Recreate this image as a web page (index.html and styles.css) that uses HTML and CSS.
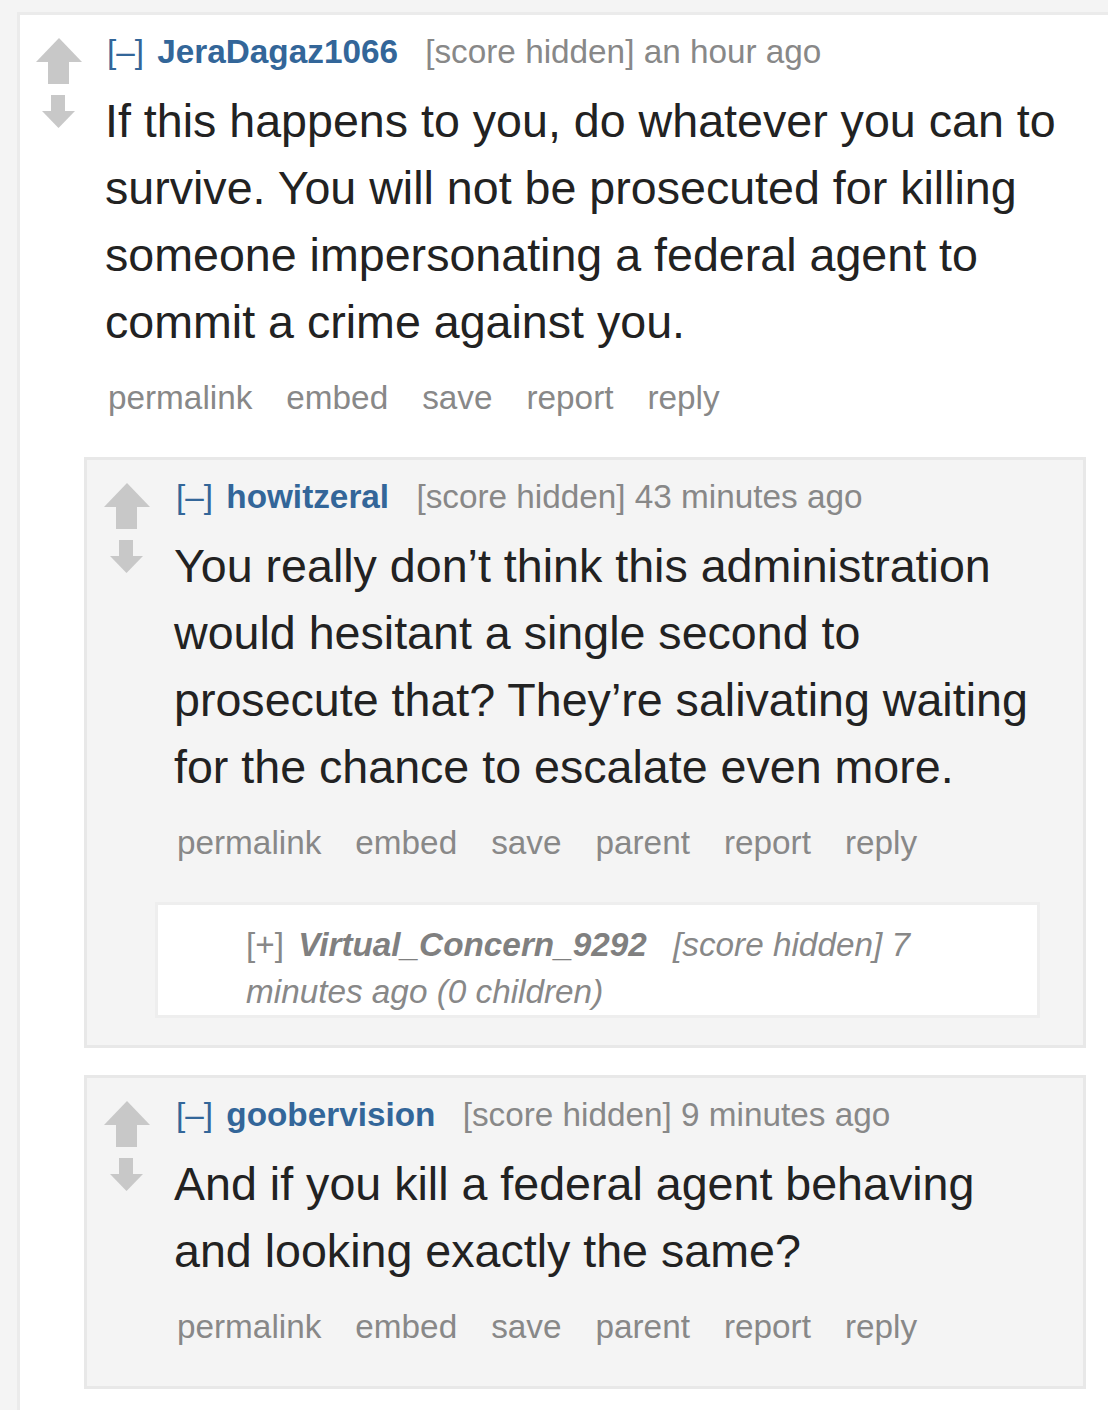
FILE: index.html
```html
<!DOCTYPE html>
<html lang="en">
<head>
    <meta charset="UTF-8">
    <title>comments</title>
    <link rel="stylesheet" href="styles.css">
</head>
<body>
    <div class="thread">
        <div class="comment top">
            <div class="comment-main">
                <div class="midcol">
                    <svg class="arrow-up" width="46" height="46" viewBox="0 0 46 46"><polygon points="0,24 23,0 46,24"/><rect x="12" y="23" width="21" height="23"/></svg>
                    <svg class="arrow-down" width="33" height="33" viewBox="0 0 33 33"><rect x="9" y="0" width="14" height="17"/><polygon points="0,16 33,16 16.5,33"/></svg>
                </div>
                <div class="entry">
                    <p class="tagline"><a class="expand">[–]</a> <a class="author">JeraDagaz1066</a> <span class="score">[score hidden]</span> <span class="time">an hour ago</span></p>
                    <div class="md">If this happens to you, do whatever you can to survive. You will not be prosecuted for killing someone impersonating a federal agent to commit a crime against you.</div>
                    <ul class="buttons">
                        <li>permalink</li>
                        <li>embed</li>
                        <li>save</li>
                        <li>report</li>
                        <li>reply</li>
                    </ul>
                </div>
            </div>
            <div class="children">
                <div class="comment">
                    <div class="comment-main">
                        <div class="midcol">
                            <svg class="arrow-up" width="46" height="46" viewBox="0 0 46 46"><polygon points="0,24 23,0 46,24"/><rect x="12" y="23" width="21" height="23"/></svg>
                            <svg class="arrow-down" width="33" height="33" viewBox="0 0 33 33"><rect x="9" y="0" width="14" height="17"/><polygon points="0,16 33,16 16.5,33"/></svg>
                        </div>
                        <div class="entry">
                            <p class="tagline"><a class="expand">[–]</a> <a class="author">howitzeral</a> <span class="score">[score hidden]</span> <span class="time">43 minutes ago</span></p>
                            <div class="md">You really don’t think this administration would hesitant a single second to prosecute that? They’re salivating waiting for the chance to escalate even more.</div>
                            <ul class="buttons">
                                <li>permalink</li>
                                <li>embed</li>
                                <li>save</li>
                                <li>parent</li>
                                <li>report</li>
                                <li>reply</li>
                            </ul>
                        </div>
                    </div>
                    <div class="children">
                        <div class="comment collapsed">
                            <p class="tagline"><a class="expand">[+]</a> <a class="author">Virtual_Concern_9292</a> <span class="score">[score hidden]</span> <span class="time">7 minutes ago</span> <span class="count">(0 children)</span></p>
                        </div>
                    </div>
                </div>
                <div class="comment">
                    <div class="comment-main">
                        <div class="midcol">
                            <svg class="arrow-up" width="46" height="46" viewBox="0 0 46 46"><polygon points="0,24 23,0 46,24"/><rect x="12" y="23" width="21" height="23"/></svg>
                            <svg class="arrow-down" width="33" height="33" viewBox="0 0 33 33"><rect x="9" y="0" width="14" height="17"/><polygon points="0,16 33,16 16.5,33"/></svg>
                        </div>
                        <div class="entry">
                            <p class="tagline"><a class="expand">[–]</a> <a class="author">goobervision</a> <span class="score">[score hidden]</span> <span class="time">9 minutes ago</span></p>
                            <div class="md">And if you kill a federal agent behaving and looking exactly the same?</div>
                            <ul class="buttons">
                                <li>permalink</li>
                                <li>embed</li>
                                <li>save</li>
                                <li>parent</li>
                                <li>report</li>
                                <li>reply</li>
                            </ul>
                        </div>
                    </div>
                </div>
            </div>
        </div>
    </div>
</body>
</html>
```
FILE: styles.css
```css
html, body {
    margin: 0;
    padding: 0;
    overflow: hidden;
}

body {
    background-color: #f4f4f4;
    font-family: 'Liberation Sans', Arial, sans-serif;
    color: #222;
    padding-top: 12px;
}

.thread {
    margin-left: 17px;
    width: 1115px;
}

.comment {
    border: 3px solid #e8e8e8;
    background-color: #f4f4f4;
    padding-bottom: 27px;
}

.comment.top {
    background-color: #fff;
    border-color: #ebebeb;
    padding-bottom: 60px;
}

.comment-main {
    display: flex;
}

.midcol {
    width: 69px;
    flex: none;
    padding: 23px 0 0 16px;
}

.children .midcol {
    width: 70px;
    padding-left: 17px;
}

.midcol svg {
    display: block;
    fill: #c8c8c8;
}

.arrow-down {
    margin: 11px 0 0 6px;
}

.entry {
    flex: 1;
    min-width: 0;
    padding: 17px 36px 0 0;
}

.tagline {
    margin: 0;
    padding-left: 2px;
    font-size: 33.3px;
    line-height: 40px;
    color: #888;
}

.tagline a {
    text-decoration: none;
}

.expand {
    color: #369;
    margin-right: 4px;
}

.author {
    color: #369;
    font-weight: bold;
}

.score {
    margin-left: 18px;
}

.md {
    margin-top: 16px;
    font-size: 46.6px;
    line-height: 67px;
    color: #222;
}

.buttons {
    list-style: none;
    margin: 22px 0 12px 0;
    padding: 0 0 0 3px;
    display: flex;
    gap: 34px;
    font-size: 33.3px;
    line-height: 40px;
    color: #888;
}

.children {
    margin: 27px 43px 0 64px;
}

.children .children {
    margin-left: 68px;
}

.children > .comment + .comment {
    margin-top: 27px;
}

.comment.collapsed {
    background-color: #fff;
    border-color: #eeeeee;
    padding: 16px 40px 0 88px;
}

.collapsed .tagline {
    line-height: 47px;
    padding-left: 0;
    font-style: italic;
    color: #888;
}

.collapsed .expand {
    font-style: normal;
    color: #888;
    margin-right: 5px;
}

.collapsed .author {
    color: #808080;
}

.collapsed .score {
    margin-left: 17px;
}
```
